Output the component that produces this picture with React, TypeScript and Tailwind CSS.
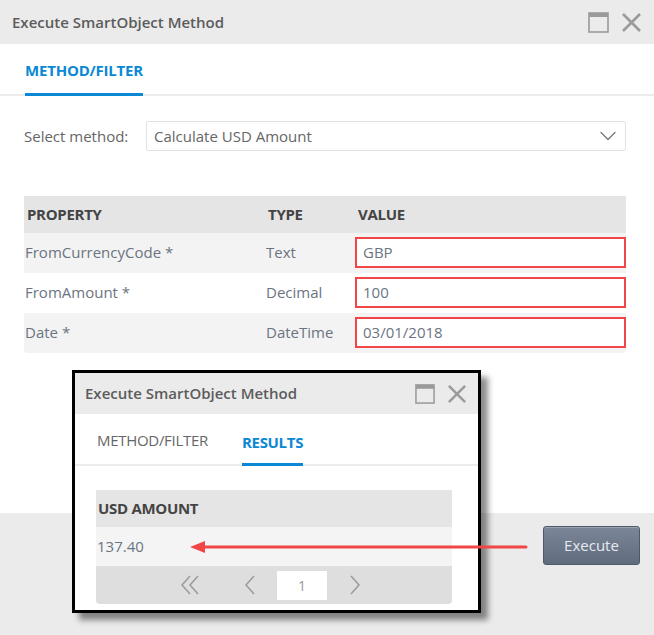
import { ChevronDown } from 'lucide-react';

const font = "font-['Open_Sans',_'Noto_Sans',_sans-serif]";

const WindowIcons = ({ small }: { small?: boolean }) => (
    <div className="flex items-center gap-[12px]">
        <svg width={small ? 20 : 21} height={small ? 20 : 21} viewBox="0 0 21 21">
            <rect x="1" y="1" width="19" height="19" fill="none" stroke="#9a9a9a" strokeWidth="1.6" />
            <rect x="1" y="1" width="19" height="4" fill="#9a9a9a" />
        </svg>
        <svg width={small ? 20 : 21} height={small ? 20 : 21} viewBox="0 0 21 21">
            <path d="M2 2 L19 19 M19 2 L2 19" stroke="#9a9a9a" strokeWidth="2.6" />
        </svg>
    </div>
);

const rows = [
    { name: 'FromCurrencyCode *', type: 'Text', value: 'GBP', bg: 'bg-[#f3f3f3]' },
    { name: 'FromAmount *', type: 'Decimal', value: '100', bg: 'bg-white' },
    { name: 'Date *', type: 'DateTime', value: '03/01/2018', bg: 'bg-[#f3f3f3]' },
];

const ResultsPopup = () => (
    <div className="absolute left-[72px] top-[370px] w-[409px] h-[243px] border-[3px] border-black bg-white shadow-[7px_7px_6px_rgba(0,0,0,0.45)] flex flex-col">
        <div className="h-[41px] bg-[#ebebeb] flex items-center justify-between pl-[10px] pr-[11px]">
            <span className="text-[15px] font-semibold text-[#5c5c5c]">Execute SmartObject Method</span>
            <WindowIcons small />
        </div>
        <div className="h-[52px] border-b-2 border-[#ececec] flex items-end pl-[22px] gap-[34px]">
            <div className="pb-[13px] text-[15px] text-[#666] tracking-[-0.3px]">METHOD/FILTER</div>
            <div className="pb-[10px] border-b-[3px] border-[#0a88d4] text-[15px] font-bold text-[#0a88d4] tracking-[-0.3px] -mb-[2px]">
                RESULTS
            </div>
        </div>
        <div className="pl-[21px] pt-[24px]">
            <div className="w-[356px] rounded-b-[4px] overflow-hidden">
                <div className="h-[37px] bg-[#e5e5e5] flex items-center pl-[2px] text-[15px] font-bold text-[#444] tracking-[-0.3px]">
                    USD AMOUNT
                </div>
                <div className="h-[39px] bg-[#f4f4f4] flex items-center pl-[1px] text-[15px] text-[#6b7482]">
                    137.40
                </div>
                <div className="h-[38px] bg-[#dedede] flex items-center pl-[84px]">
                    <svg width="20" height="20" viewBox="0 0 20 20">
                        <path d="M10 1 L2 10 L10 19 M18 1 L10 10 L18 19" fill="none" stroke="#9a9a9a" strokeWidth="1.5" />
                    </svg>
                    <svg width="10" height="20" viewBox="0 0 10 20" className="ml-[45px]">
                        <path d="M9 1 L1 10 L9 19" fill="none" stroke="#9a9a9a" strokeWidth="1.5" />
                    </svg>
                    <div className="ml-[22px] w-[50px] h-[29px] bg-white flex items-center justify-center text-[14px] text-[#999]">1</div>
                    <svg width="10" height="20" viewBox="0 0 10 20" className="ml-[23px]">
                        <path d="M1 1 L9 10 L1 19" fill="none" stroke="#9a9a9a" strokeWidth="1.5" />
                    </svg>
                </div>
            </div>
        </div>
    </div>
);

export default function App() {
    return (
        <div className={`relative w-[654px] h-[635px] bg-white overflow-hidden flex flex-col ${font}`}>
            <div className="h-[44px] bg-[#ebebeb] flex items-center justify-between pl-[12px] pr-[12px] shrink-0">
                <span className="text-[15px] font-semibold text-[#5c5c5c]">Execute SmartObject Method</span>
                <WindowIcons />
            </div>

            <div className="h-[52px] border-b-2 border-[#ececec] flex items-end pl-[25px] shrink-0">
                <div className="pb-[12px] border-b-[3px] border-[#0a88d4] text-[15px] font-bold text-[#0a88d4] tracking-[-0.2px] -mb-[2px]">
                    METHOD/FILTER
                </div>
            </div>

            <div className="h-[417px] pl-[24px] pr-[28px] pt-[25px] shrink-0">
                <div className="flex items-center justify-between">
                    <span className="text-[15px] text-[#666] whitespace-nowrap">Select method:</span>
                    <div className="w-[480px] h-[30px] border border-[#e2e2e2] rounded-[2px] flex items-center justify-between pl-[7px] pr-[3px]">
                        <span className="text-[15px] text-[#666]">Calculate USD Amount</span>
                        <ChevronDown size={28} strokeWidth={1.1} color="#777" />
                    </div>
                </div>

                <div className="mt-[45px] rounded-b-[4px] overflow-hidden">
                    <div className="h-[37px] bg-[#e5e5e5] grid grid-cols-[241px_90px_1fr] items-center text-[15px] font-bold text-[#444] tracking-[-0.3px]">
                        <span className="pl-[3px]">PROPERTY</span>
                        <span className="pl-[3px]">TYPE</span>
                        <span className="pl-[3px]">VALUE</span>
                    </div>
                    {rows.map((r) => (
                        <div key={r.name} className={`h-[40px] grid grid-cols-[241px_90px_1fr] items-center text-[15px] text-[#6b7482] ${r.bg}`}>
                            <span className="pl-[1px] -mt-[2px]">{r.name}</span>
                            <span className="pl-[1px] -mt-[2px]">{r.type}</span>
                            <div className="h-[31px] border-2 border-[#f04646] bg-white flex items-center pl-[6px] -mt-[2px]">
                                {r.value}
                            </div>
                        </div>
                    ))}
                </div>
            </div>

            <div className="flex-1 bg-[#ebebeb] flex justify-end pt-[13px] pr-[14px]">
                <button className="w-[97px] h-[39px] rounded-[3px] border border-[#4d5868] bg-gradient-to-b from-[#7b8699] to-[#606c7e] text-[15px] text-[#e6eaef] shadow-[inset_0_1px_0_rgba(255,255,255,0.25)]">
                    Execute
                </button>
            </div>

            <ResultsPopup />

            <svg className="absolute left-[188px] top-[538px]" width="342" height="18" viewBox="0 0 342 18">
                <line x1="14" y1="9" x2="338" y2="9" stroke="#f04646" strokeWidth="3" strokeLinecap="round" />
                <path d="M2 9 L17 3 L17 15 Z" fill="#f04646" />
            </svg>
        </div>
    );
}
